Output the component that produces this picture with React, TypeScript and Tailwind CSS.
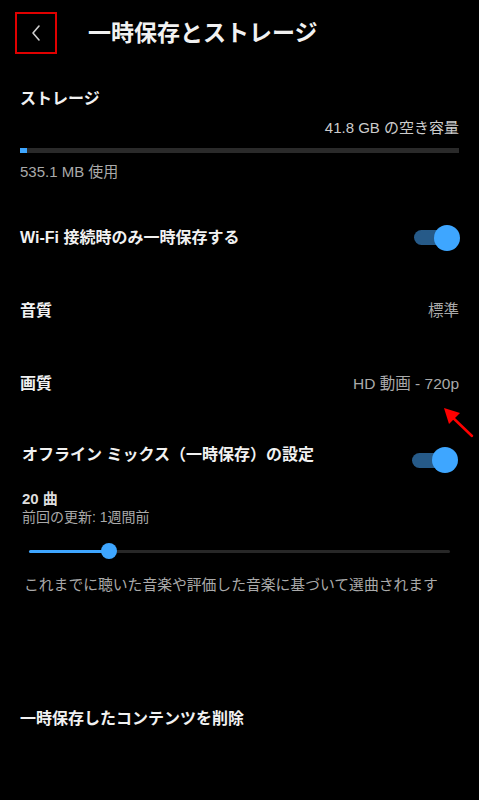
import React from 'react';

function Toggle() {
  return (
    <div className="relative w-[48px] h-[26px] flex items-center">
      <div className="ml-[2px] w-[34px] h-[15px] rounded-full bg-[#265a88]" />
      <div className="absolute right-0 top-0 w-[26px] h-[26px] rounded-full bg-[#3ea6ff]" />
    </div>
  );
}

function ValueRow({ label, value }: { label: string; value: string }) {
  return (
    <div className="h-[73px] flex items-center justify-between px-5">
      <span className="text-[16px] font-bold text-[#f1f1f1]">{label}</span>
      <span className="text-[15.5px] text-[#aaaaaa]">{value}</span>
    </div>
  );
}

export default function App() {
  const used = 1.5;
  const mix = 19;

  return (
    <div
      className="relative w-[479px] h-[800px] bg-black overflow-hidden"
      style={{ fontFamily: '"Liberation Sans", "Noto Sans CJK JP", "Noto Sans", sans-serif' }}
    >
      {/* header */}
      <div className="h-[66px] flex items-center">
        <div className="ml-[15px] w-[42px] h-[42px] border-2 border-[#e00000] flex items-center justify-center">
          <svg width="14" height="18" viewBox="0 0 14 18" fill="none">
            <path d="M10 2 L4 9 L10 16" stroke="#cfcfcf" strokeWidth="1.6" strokeLinecap="round" strokeLinejoin="round" />
          </svg>
        </div>
        <h1 className="ml-[31px] text-[23px] font-bold text-[#f1f1f1] leading-none">一時保存とストレージ</h1>
      </div>

      {/* storage */}
      <div className="px-5">
        <div className="mt-[21px] h-[24px] leading-[24px] text-[16px] font-bold text-[#f1f1f1]">ストレージ</div>
        <div className="mt-[7px] h-[20px] leading-[20px] text-right text-[15px] text-[#cccccc]">41.8 GB の空き容量</div>
        <div className="mt-[10px] h-[5px] bg-[#2a2a2a]">
          <div className="h-full bg-[#3ea6ff]" style={{ width: `${used}%` }} />
        </div>
        <div className="mt-[9px] h-[20px] leading-[20px] text-[15px] text-[#aaaaaa]">535.1 MB 使用</div>
      </div>

      {/* settings */}
      <div className="mt-[19px]">
        <div className="h-[73px] flex items-center justify-between px-5">
          <span className="text-[16px] font-bold text-[#f1f1f1]">Wi-Fi 接続時のみ一時保存する</span>
          <div className="-mr-[1px]">
            <Toggle />
          </div>
        </div>
        <ValueRow label="音質" value="標準" />
        <ValueRow label="画質" value="HD 動画 - 720p" />
      </div>

      {/* offline mix */}
      <div className="pl-[22px] pr-[20px]">
        <div className="mt-[23px] flex items-start justify-between">
          <span className="h-[24px] leading-[24px] text-[16px] font-bold text-[#f1f1f1]">オフライン ミックス（一時保存）の設定</span>
          <div className="mt-[4px] mr-[1px]">
            <Toggle />
          </div>
        </div>
        <div className="mt-[15px] h-[22px] leading-[22px] text-[15px] font-bold text-[#dddddd]">20 曲</div>
        <div className="-mt-[3px] h-[20px] leading-[20px] text-[14px] text-[#aaaaaa]">前回の更新: 1週間前</div>
        <div className="mt-[16px] h-[16px] ml-[7px] mr-[9px] relative flex items-center">
          <div className="w-full h-[3px] bg-[#272727] rounded-full">
            <div className="h-full bg-[#3ea6ff] rounded-full" style={{ width: `${mix}%` }} />
          </div>
          <div
            className="absolute top-0 w-[16px] h-[16px] -ml-[8px] rounded-full bg-[#3ea6ff]"
            style={{ left: `${mix}%` }}
          />
        </div>
        <div className="mt-[16px] ml-[2px] h-[20px] leading-[20px] text-[14.8px] text-[#aaaaaa] whitespace-nowrap">
          これまでに聴いた音楽や評価した音楽に基づいて選曲されます
        </div>
      </div>

      <div className="mt-[112px] px-5 h-[24px] leading-[24px] text-[16px] font-bold text-[#f1f1f1]">一時保存したコンテンツを削除</div>

      {/* annotation arrow */}
      <svg className="absolute left-[436px] top-[400px]" width="43" height="42" viewBox="0 0 43 42">
        <line x1="36" y1="36" x2="14" y2="15" stroke="#ff0000" strokeWidth="2.5" strokeLinecap="round" />
        <polygon points="8,8 24,13 13,24" fill="#ff0000" />
      </svg>
    </div>
  );
}
